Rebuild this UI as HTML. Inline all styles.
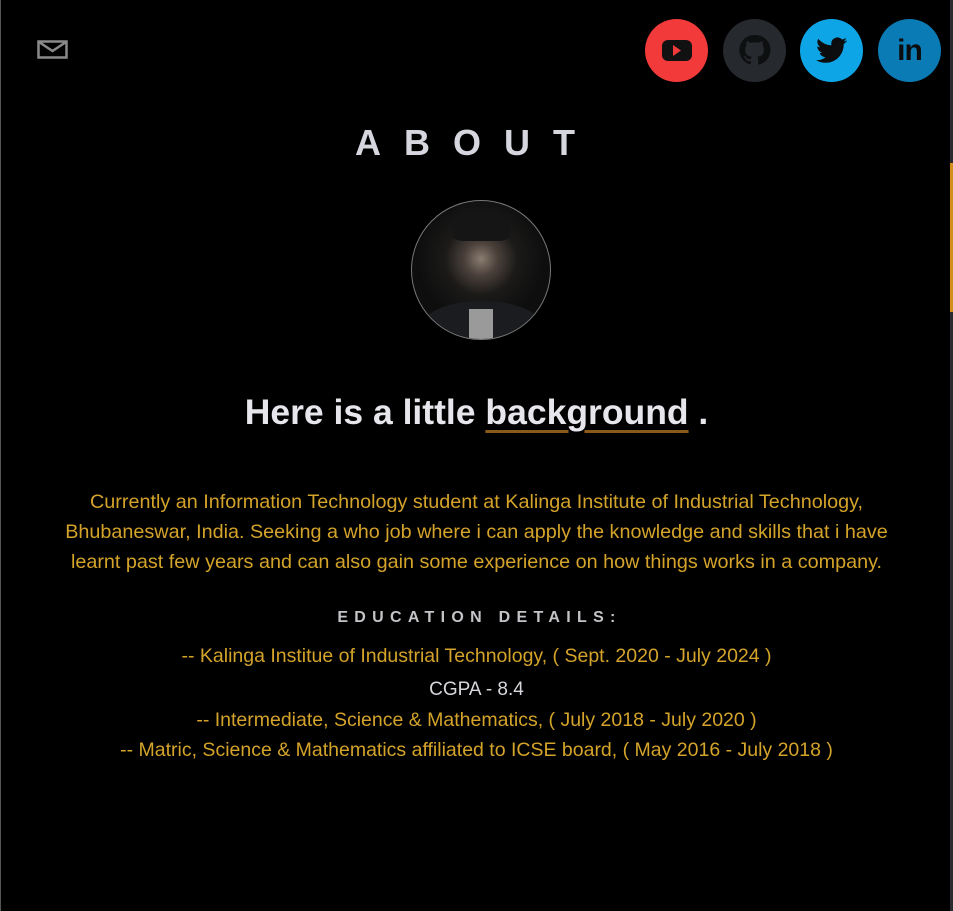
<!DOCTYPE html>
<html><head><meta charset="utf-8"><style>
html,body{margin:0;padding:0;background:#000;width:953px;height:911px;overflow:hidden;font-family:"Liberation Sans",sans-serif}
.lb{position:absolute;left:0;top:0;width:1px;height:911px;background:#555}
.rb{position:absolute;right:0;top:0;width:3px;height:911px;background:#2a2c30}
.rt{position:absolute;right:0;top:163px;width:3px;height:149px;background:#d4901c}
.ic{position:absolute;top:19px;width:63px;height:63px;border-radius:50%}
.c{position:absolute;left:0;width:953px;text-align:center;white-space:nowrap}
.g{color:#d4a32a}
</style></head><body>
<div class="lb"></div><div class="rb"></div><div class="rt"></div>
<svg style="position:absolute;left:37px;top:40px" width="31" height="19" viewBox="0 0 31 19"><rect x="1.5" y="1.5" width="28" height="16" fill="none" stroke="#8a8a8a" stroke-width="2.5"/><path d="M2 2 L15.5 11 L29 2" fill="none" stroke="#8a8a8a" stroke-width="2.5"/></svg>
<div class="ic" style="left:645px;background:#f33a3a"><svg width="63" height="63" viewBox="0 0 63 63"><rect x="17" y="21" width="30" height="21" rx="6" fill="#111"/><path d="M28 26 L36 31.5 L28 37Z" fill="#f33a3a"/></svg></div>
<div class="ic" style="left:723px;background:#26292e"><svg width="63" height="63" viewBox="0 0 63 63"><path d="M31.5 16a15 15 0 0 0-4.7 29.3c.7.1 1-.3 1-.7v-2.6c-4.2.9-5-1.8-5-1.8-.7-1.7-1.7-2.2-1.7-2.2-1.4-.9.1-.9.1-.9 1.5.1 2.3 1.5 2.3 1.5 1.3 2.3 3.5 1.6 4.4 1.2.1-1 .5-1.6 1-2-3.3-.4-6.8-1.7-6.8-7.4 0-1.6.6-3 1.5-4-.1-.4-.7-1.9.1-4 0 0 1.3-.4 4.1 1.5a14 14 0 0 1 7.5 0c2.9-1.9 4.1-1.5 4.1-1.5.8 2.1.3 3.6.1 4 1 1 1.5 2.4 1.5 4 0 5.8-3.5 7-6.8 7.4.5.5 1 1.4 1 2.8v4.2c0 .4.3.9 1 .7A15 15 0 0 0 31.5 16z" fill="#0e0f11"/></svg></div>
<div class="ic" style="left:800px;background:#0ea5e6"><svg width="63" height="63" viewBox="0 0 63 63"><path d="M47 21.5c-1.1.5-2.4.8-3.6 1 1.3-.8 2.3-2 2.8-3.5-1.2.7-2.6 1.2-4 1.5a6.3 6.3 0 0 0-10.8 5.8c-5.3-.3-10-2.8-13.1-6.6-.6 1-.9 2.1-.9 3.2 0 2.2 1.1 4.1 2.8 5.3-1 0-2-.3-2.9-.8v.1c0 3.1 2.2 5.6 5.1 6.2-.9.3-1.9.3-2.8.1.8 2.5 3.1 4.3 5.9 4.4A12.7 12.7 0 0 1 16 41c2.8 1.8 6.1 2.8 9.7 2.8 11.6 0 18-9.6 18-18v-.8c1.3-.9 2.4-2 3.3-3.3z" fill="#0b0c0e"/></svg></div>
<div class="ic" style="left:878px;background:#0a7bb5"><div style="position:absolute;left:0;top:16px;width:63px;text-align:center;font-weight:bold;font-size:30px;line-height:32px;color:#0b0c0e;letter-spacing:-1px">in</div></div>
<div class="c" style="top:122px;font-size:36px;font-weight:bold;color:#d6d6de;letter-spacing:23px">ABOUT</div>
<div style="position:absolute;left:411px;top:200px;width:138px;height:138px;border-radius:50%;border:1px solid #777;overflow:hidden;background:radial-gradient(circle at 50% 42%,#8a7c70 0,#4a403a 16%,#1b1a19 34%,#0e0e0e 60%)">
<div style="position:absolute;left:10px;top:100px;width:120px;height:50px;background:#1a1c1f;border-radius:50% 50% 0 0"></div>
<div style="position:absolute;left:57px;top:108px;width:24px;height:30px;background:#9a9a9a"></div>
<div style="position:absolute;left:40px;top:10px;width:58px;height:30px;background:#151515;border-radius:50% 50% 20% 20%"></div>
</div>
<div class="c" style="top:392px;font-size:35.5px;font-weight:bold;color:#e6e6ec">Here is a little <span style="text-decoration:underline;text-decoration-color:#8a5a1a;text-decoration-thickness:3px;text-underline-offset:6px">background</span> .</div>
<div class="c g" style="top:487px;font-size:19.8px;line-height:30px">Currently an Information Technology student at Kalinga Institute of Industrial Technology,<br>Bhubaneswar, India. Seeking a who job where i can apply the knowledge and skills that i have<br>learnt past few years and can also gain some experience on how things works in a company.</div>
<div class="c" style="top:609px;font-size:16px;font-weight:bold;color:#c4c4c8;letter-spacing:6.3px;text-indent:6px">EDUCATION DETAILS:</div>
<div class="c g" style="top:645px;font-size:19.5px">-- Kalinga Institue of Industrial Technology, ( Sept. 2020 - July 2024 )</div>
<div class="c" style="top:679px;font-size:19px;color:#d6d6dc">CGPA - 8.4</div>
<div class="c g" style="top:709px;font-size:19.5px">-- Intermediate, Science &amp; Mathematics, ( July 2018 - July 2020 )</div>
<div class="c g" style="top:739px;font-size:19.5px">-- Matric, Science &amp; Mathematics affiliated to ICSE board, ( May 2016 - July 2018 )</div>
</body></html>
